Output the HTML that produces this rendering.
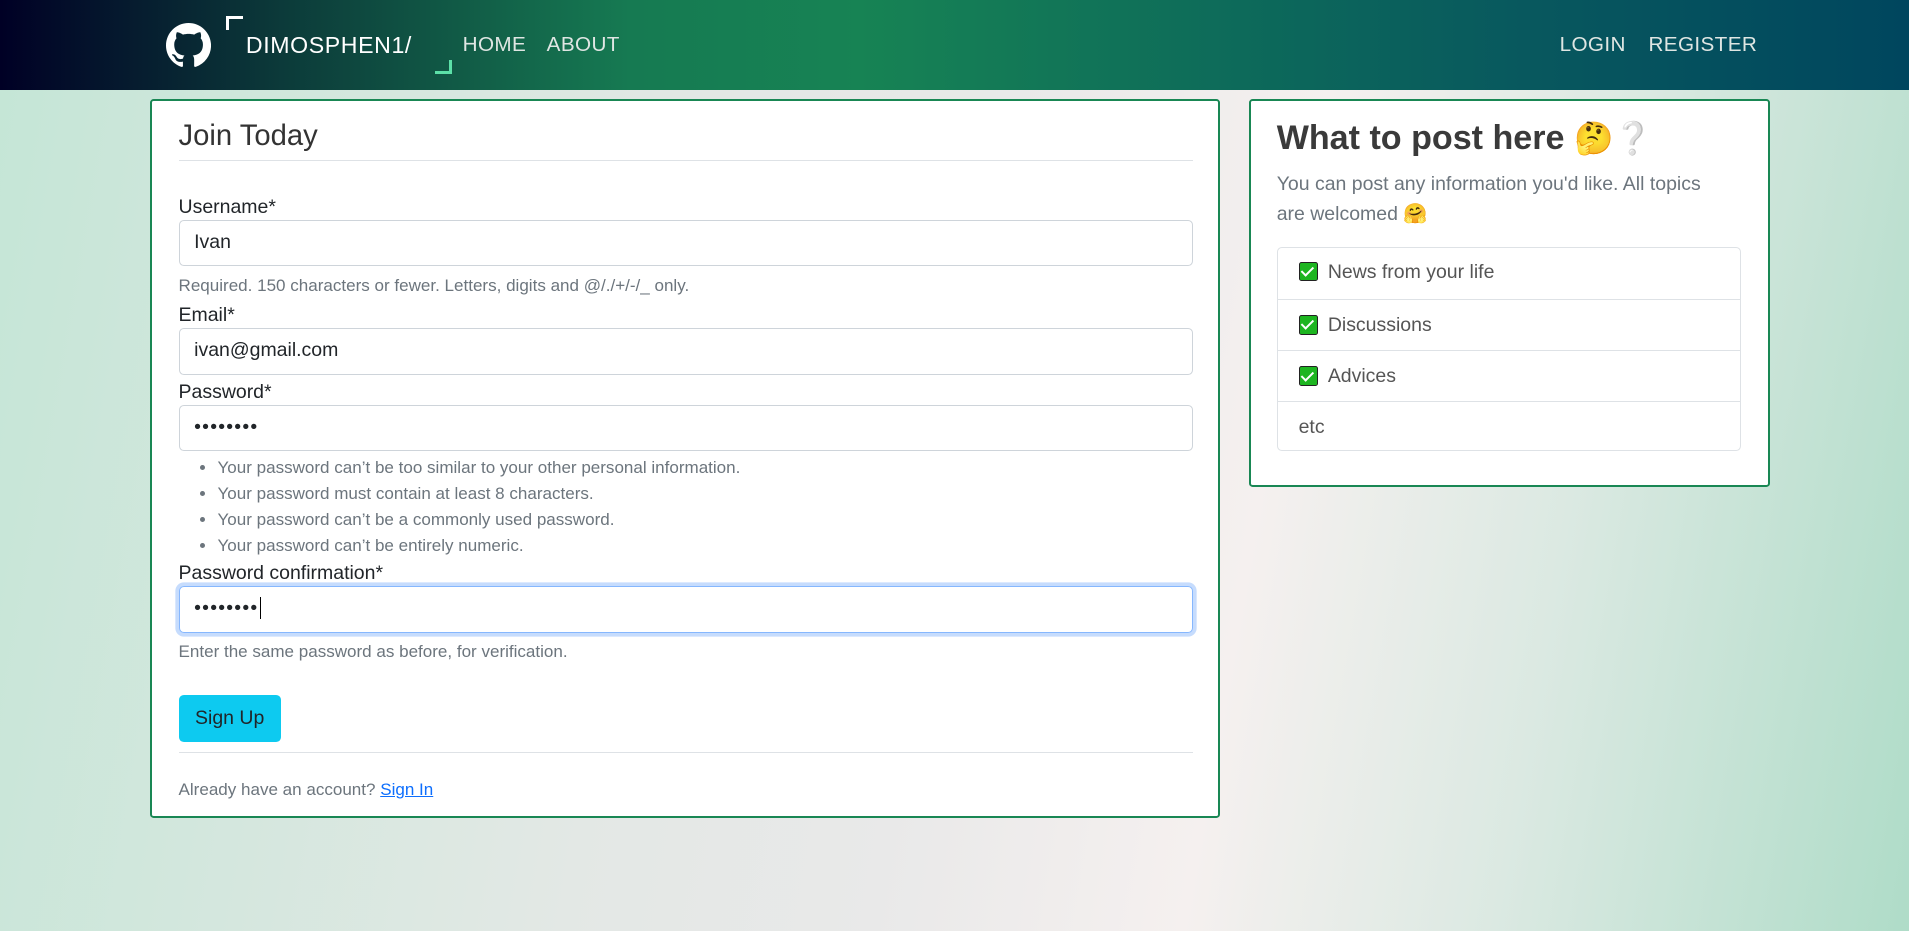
<!DOCTYPE html>
<html><head><meta charset="utf-8"><style>
html{zoom:1.2175}
body{margin:0;width:1568px;height:765px;overflow:hidden;font-family:"Liberation Sans",sans-serif;color:#212529;font-size:16px;
background:linear-gradient(100deg,#c4e6d6 0%,#e3e8e5 35%,#e9e9e9 50%,#f5f0ef 65%,#dbe9e2 80%,#afdcc8 100%);}
.nav{height:74px;background:linear-gradient(90deg,#000025 0%,#0c3b3a 15%,#167a52 33%,#178354 45%,#0d6a5a 65%,#08585e 80%,#00465e 100%);position:relative;color:#fff}
.nav a{position:absolute;top:27px;font-size:17px;letter-spacing:.3px;color:#dfe6e3;text-decoration:none}
.card{position:absolute;background:#fff;border:2px solid #198754;border-radius:3px;box-sizing:border-box}
label{position:absolute;left:22px;font-size:16px}
.inp{position:absolute;left:22px;width:833px;height:38px;border:1px solid #ced4da;border-radius:4px;box-sizing:border-box;padding:0 12px;line-height:36px;font-size:16px}
.help{position:absolute;left:22px;font-size:14px;color:#6c757d}
ul{position:absolute;left:22px;margin:0;padding-left:32px;font-size:14px;color:#6c757d;line-height:21.5px}
.li{position:absolute;left:21px;width:381px;height:42px;border-top:1px solid #dee2e6;box-sizing:border-box;padding-left:18px;line-height:42px;color:#555;font-size:16px}
.ck{display:inline-block;width:16px;height:16px;background:#1db520;border:1px solid #222;border-radius:2px;vertical-align:-3px;margin-right:8px;position:relative;box-sizing:border-box}
.ck:after{content:"";position:absolute;left:4px;top:1px;width:4px;height:8px;border:solid #fff;border-width:0 2px 2px 0;transform:rotate(45deg)}
</style></head><body>
<div class="nav">
<svg style="position:absolute;left:136px;top:19px" width="37" height="37" viewBox="0 0 16 16"><path fill="#fff" d="M8 0C3.58 0 0 3.580 0 8c0 3.54 2.29 6.53 5.47 7.590.4.07.55-.17.55-.38 0-.19-.01-.82-.01-1.49-2.01.37-2.53-.49-2.690-.94-.09-.23-.48-.94-.82-1.13-.28-.15-.68-.52-.01-.53.63-.01 1.08.58 1.23.82.72 1.21 1.87.87 2.33.66.07-.52.28-.87.51-1.07-1.78-.2-3.64-.89-3.64-3.95 0-.87.31-1.59.82-2.15-.08-.2-.36-1.02.08-2.12 0 0 .67-.21 2.2.82.64-.18 1.32-.27 2-.27.68 0 1.36.09 2 .27 1.53-1.04 2.2-.82 2.2-.82.44 1.1.16 1.92.08 2.12.51.56.82 1.27.82 2.15 0 3.07-1.87 3.75-3.65 3.950.29.25.54.73.54 1.48 0 1.07-.01 1.93-.01 2.2 0 .21.15.46.55.38A8.013 8.013 0 0016 8c0-4.42-3.58-8-8-8z"/></svg>
<div style="position:absolute;left:186px;top:13px;width:14px;height:12px;border-left:3px solid #fff;border-top:3px solid #fff;box-sizing:border-box"></div>
<div style="position:absolute;left:202px;top:26px;font-size:19px;letter-spacing:.5px">DIMOSPHEN1/</div>
<div style="position:absolute;left:357px;top:49px;width:14px;height:12px;border-right:3px solid #5ce0a8;border-bottom:3px solid #5ce0a8;box-sizing:border-box"></div>
<a style="left:380px">HOME</a><a style="left:449px">ABOUT</a>
<a style="left:1281px">LOGIN</a><a style="left:1354px">REGISTER</a>
</div>
<div class="card" style="left:123px;top:81px;width:879px;height:591px">
<div style="position:absolute;left:22px;top:16px;width:833px;font-size:24px;color:#333;border-bottom:1px solid #dee2e6;height:33px">Join Today</div>
<label style="top:78px">Username*</label>
<div class="inp" style="top:98px">Ivan</div>
<div class="help" style="top:144px">Required. 150 characters or fewer. Letters, digits and @/./+/-/_ only.</div>
<label style="top:167px">Email*</label>
<div class="inp" style="top:187px">ivan@gmail.com</div>
<label style="top:230px">Password*</label>
<div class="inp" style="top:250px;letter-spacing:1px">••••••••</div>
<ul style="top:291px"><li>Your password can’t be too similar to your other personal information.</li><li>Your password must contain at least 8 characters.</li><li>Your password can’t be a commonly used password.</li><li>Your password can’t be entirely numeric.</li></ul>
<label style="top:379px">Password confirmation*</label>
<div class="inp" style="top:399px;border-color:#86b7fe;box-shadow:0 0 0 3px #c6dcfd;letter-spacing:1px">••••••••<span style="border-left:1px solid #000;margin-left:1px"></span></div>
<div class="help" style="top:445px">Enter the same password as before, for verification.</div>
<div style="position:absolute;left:22px;top:488px;width:84px;height:39px;background:#0dcaf0;border-radius:4px;text-align:center;line-height:39px">Sign Up</div>
<div style="position:absolute;left:22px;top:535px;width:833px;border-top:1px solid #dee2e6"></div>
<div class="help" style="top:558px">Already have an account? <span style="color:#0d6efd;text-decoration:underline">Sign In</span></div>
</div>
<div class="card" style="left:1026px;top:81px;width:428px;height:319px">
<div style="position:absolute;left:21px;top:15px;font-size:28px;font-weight:bold;color:#3a3a3a">What to post here <span style="font-size:26px">🤔❔</span></div>
<div style="position:absolute;left:21px;top:56px;width:360px;color:#6c757d;line-height:25px">You can post any information you'd like. All topics are welcomed 🤗</div>
<div style="position:absolute;left:21px;top:120px;width:381px;height:168px;border:1px solid #dee2e6;border-radius:4px;box-sizing:border-box"></div>
<div class="li" style="top:120px;border-top:0"><span class="ck"></span>News from your life</div>
<div class="li" style="top:163px"><span class="ck"></span>Discussions</div>
<div class="li" style="top:205px"><span class="ck"></span>Advices</div>
<div class="li" style="top:247px">etc</div>
</div>
</body></html>
